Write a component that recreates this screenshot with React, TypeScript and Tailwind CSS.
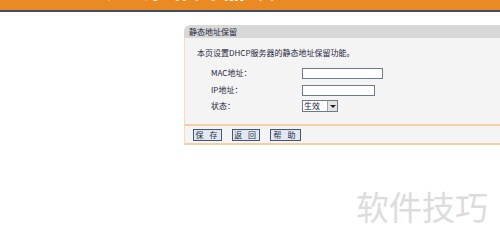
import React from "react";

const F = { fontFamily: '"Noto Sans CJK SC", "DejaVu Sans", sans-serif' };

export default function App() {
  return (
    <div className="w-[500px] h-[242px] bg-white overflow-hidden relative" style={F}>
      <div className="h-[10px] bg-[#e98b22] overflow-hidden relative">
        <div className="absolute left-[106px] top-[-25px] text-white font-bold text-[24px] leading-[26px] tracking-[5px] whitespace-nowrap">
          无线路由器设置
        </div>
      </div>
      <div className="h-[2px] bg-[#3d4c6e]" />
      <div className="ml-[184px] mt-[13px] w-[316px]">
        <div className="h-[13px] bg-[#d8d8d8] rounded-tl-[6px] text-[8px] leading-[13px] text-[#1e1e3c] pl-[5px]">
          静态地址保留
        </div>
        <div className="bg-[#f4f4f4] border-l border-[#f7dcbc]">
          <div className="h-[86px] pt-[9px] pl-[12px] text-[8px] text-[#1e1e3c]">
            <div className="leading-[12px]">本页设置DHCP服务器的静态地址保留功能。</div>
            <div className="mt-[8px] flex items-center h-[12px]">
              <div className="w-[105px] pl-[14px] leading-[12px]">MAC地址：</div>
              <div className="w-[81px] h-[11px] bg-white border border-[#6b7b8b]" />
            </div>
            <div className="mt-[5px] flex items-center h-[12px]">
              <div className="w-[105px] pl-[14px] leading-[12px]">IP地址：</div>
              <div className="w-[73px] h-[11px] bg-white border border-[#6b7b8b]" />
            </div>
            <div className="mt-[4px] flex items-center h-[12px]">
              <div className="w-[105px] pl-[14px] leading-[12px]">状态：</div>
              <div className="w-[36px] h-[12px] bg-white border border-[#6b7b8b] flex items-center">
                <div className="flex-1 pl-[1px] text-[8px] leading-[10px]">生效</div>
                <div className="w-[10px] h-[10px] bg-[#e4e4e4] border-l border-[#9aa] flex items-center justify-center">
                  <div className="w-0 h-0 border-l-[3px] border-r-[3px] border-t-[3px] border-l-transparent border-r-transparent border-t-[#222]" />
                </div>
              </div>
            </div>
          </div>
          <div className="h-[2px] bg-[#f5cfa3]" />
          <div className="h-[17px] flex items-center pl-[8px] gap-[10px]">
            <div className="w-[29px] h-[12px] bg-[#e2e8ee] border border-[#3b5877] text-[8px] leading-[10px] text-[#1e2a50] text-center tracking-[2px]">保 存</div>
            <div className="w-[28px] h-[12px] bg-[#e2e8ee] border border-[#3b5877] text-[8px] leading-[10px] text-[#1e2a50] text-center tracking-[2px]">返 回</div>
            <div className="w-[31px] h-[12px] bg-[#e2e8ee] border border-[#3b5877] text-[8px] leading-[10px] text-[#1e2a50] text-center tracking-[2px]">帮 助</div>
          </div>
          <div className="h-[2px] bg-[#f5cfa3]" />
        </div>
      </div>
      <div className="absolute left-[356px] top-[186px] text-[33px] leading-[40px] text-[#dcdcdc] whitespace-nowrap">
        软件技巧
      </div>
    </div>
  );
}
